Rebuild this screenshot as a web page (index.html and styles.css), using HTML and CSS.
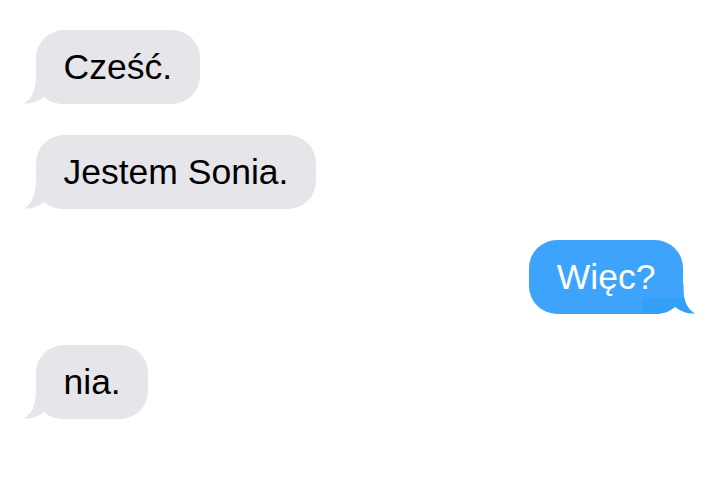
FILE: index.html
```html
<!DOCTYPE html>
<html lang="pl">
<head>
<meta charset="utf-8">
<title>Wiadomości</title>
<link rel="stylesheet" href="styles.css">
</head>
<body>
<div class="chat">
  <p class="msg them">Cześć.<svg class="tail tail-them" width="54" height="32" viewBox="0 0 54 32"><path d="M12,2 C12,18 8,27 0,31.5 C7,32 13,30 20,25 C26,30 32,32 40,32 L52,32 L52,12 L18,12 L18,2 Z"/></svg></p>
  <p class="msg them">Jestem Sonia.<svg class="tail tail-them" width="54" height="32" viewBox="0 0 54 32"><path d="M12,2 C12,18 8,27 0,31.5 C7,32 13,30 20,25 C26,30 32,32 40,32 L52,32 L52,12 L18,12 L18,2 Z"/></svg></p>
  <p class="msg me">Więc?<svg class="tail tail-me" width="54" height="32" viewBox="0 0 54 32"><path class="fill-light" d="M30,2 L42.5,2 L42.5,16.5 L30,16.5 Z"/><path class="fill-dark" d="M42,2 C42,18 46,27 54,31.5 C47,32 41,30 34,25 C28,30 22,32 14,32 L2,32 L2,16 L42,16 Z"/></svg></p>
  <p class="msg them">nia.<svg class="tail tail-them" width="54" height="32" viewBox="0 0 54 32"><path d="M12,2 C12,18 8,27 0,31.5 C7,32 13,30 20,25 C26,30 32,32 40,32 L52,32 L52,12 L18,12 L18,2 Z"/></svg></p>
</div>
</body>
</html>
```
FILE: styles.css
```css
html, body {
  margin: 0;
  padding: 0;
  background: #ffffff;
}

.chat {
  display: flex;
  flex-direction: column;
  gap: 31px;
  padding: 30px 30px 0 36px;
  font-family: "Liberation Sans", Arial, sans-serif;
}

.msg {
  position: relative;
  margin: 0;
  padding: 14px 27.5px;
  font-size: 35.5px;
  line-height: 46px;
  border-radius: 28px;
  white-space: nowrap;
}

.them {
  align-self: flex-start;
  background: #e5e5ea;
  color: #000;
}

.me {
  align-self: flex-end;
  background: #3ea3fa;
  color: #fff;
}

.tail {
  position: absolute;
  bottom: 0;
  display: block;
}

.tail-them {
  left: -12px;
  fill: #e5e5ea;
}

.tail-me {
  right: -12px;
}

.fill-light {
  fill: #3ea3fa;
}

.fill-dark {
  fill: #339ff9;
}
```
